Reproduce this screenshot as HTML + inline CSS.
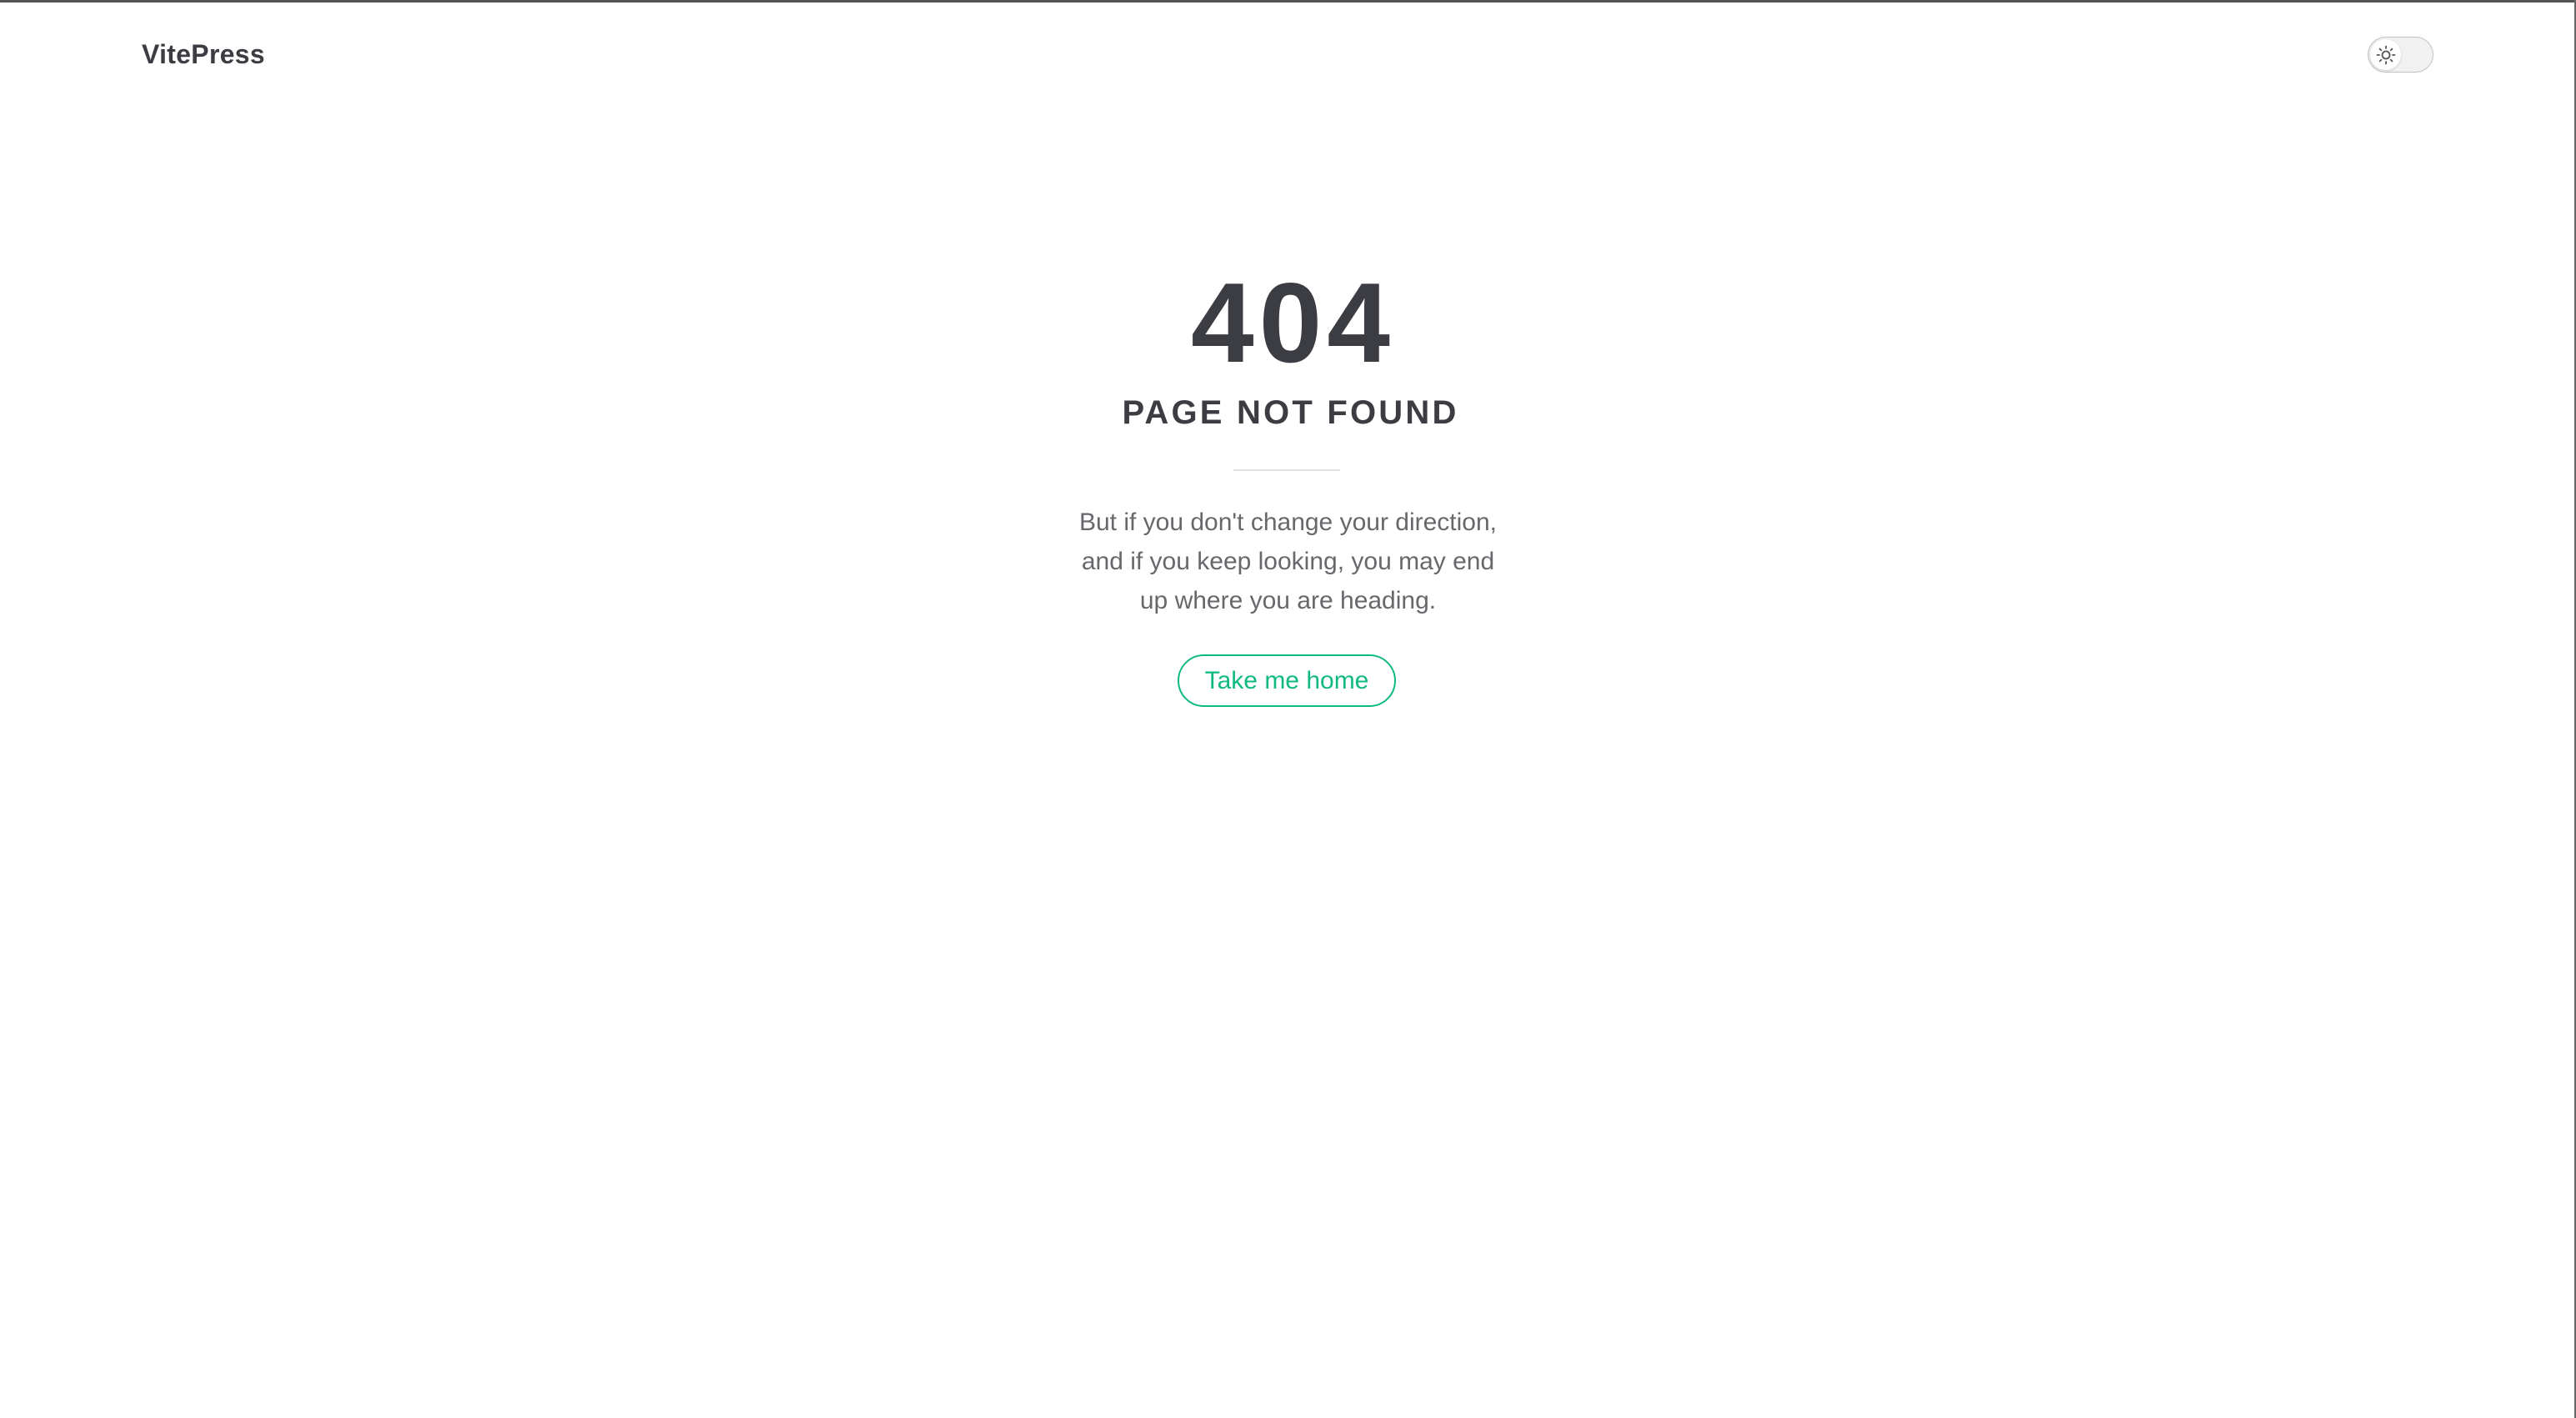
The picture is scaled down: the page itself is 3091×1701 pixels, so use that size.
<!DOCTYPE html>
<html><head><meta charset="utf-8"><style>
html,body{margin:0;padding:0;background:#fff;}
body{width:3091px;height:1701px;position:relative;overflow:hidden;font-family:"Liberation Sans",sans-serif;}
.topb{position:absolute;left:0;top:0;width:3091px;height:3px;background:#555;}
.rb{position:absolute;right:0;top:0;width:2px;height:1701px;background:#666;}
.logo{position:absolute;left:170px;top:44px;font-size:32px;font-weight:bold;color:#3c3c43;line-height:42px;letter-spacing:0.3px;}
.tog{position:absolute;left:2841px;top:44px;width:77px;height:41px;border:1px solid #c2c2c4;border-radius:22px;background:#f1f1f1;}
.knob{position:absolute;left:2844px;top:47px;width:37px;height:37px;border-radius:50%;background:#fff;box-shadow:0 1px 3px rgba(0,0,0,.15);}
.c{position:absolute;left:0;width:3091px;text-align:center;color:#3c3c43;}
.n404{top:319px;font-size:136px;font-weight:bold;line-height:136px;letter-spacing:6px;padding-left:6px;}
.pnf{top:475px;font-size:40px;font-weight:bold;letter-spacing:3.2px;line-height:40px;padding-left:3px;}
.div{position:absolute;left:1480px;top:563px;width:128px;height:2px;background:#e2e2e3;}
.p{top:603px;font-size:30px;line-height:47px;color:#67676c;}
.btn{position:absolute;left:1413px;top:785px;width:258px;height:59px;border:2px solid #10b981;border-radius:32px;color:#10b981;font-size:30px;line-height:59px;text-align:center;}
</style></head><body>
<div class="topb"></div><div class="rb"></div>
<div class="logo">VitePress</div>
<div class="tog"></div><div class="knob"></div>
<svg style="position:absolute;left:2851px;top:54px" width="24" height="24" viewBox="0 0 24 24" fill="none" stroke="#555" stroke-width="1.8" stroke-linecap="round">
<circle cx="12" cy="12" r="4.5"/>
<path d="M12 1.5v2.5M12 20v2.5M1.5 12h2.5M20 12h2.5M4.6 4.6l1.7 1.7M17.7 17.7l1.7 1.7M4.6 19.4l1.7-1.7M17.7 6.3l1.7-1.7"/>
</svg>
<div class="c n404">404</div>
<div class="c pnf">PAGE NOT FOUND</div>
<div class="div"></div>
<div class="c p">But if you don't change your direction,<br>and if you keep looking, you may end<br>up where you are heading.</div>
<div class="btn">Take me home</div>
</body></html>
